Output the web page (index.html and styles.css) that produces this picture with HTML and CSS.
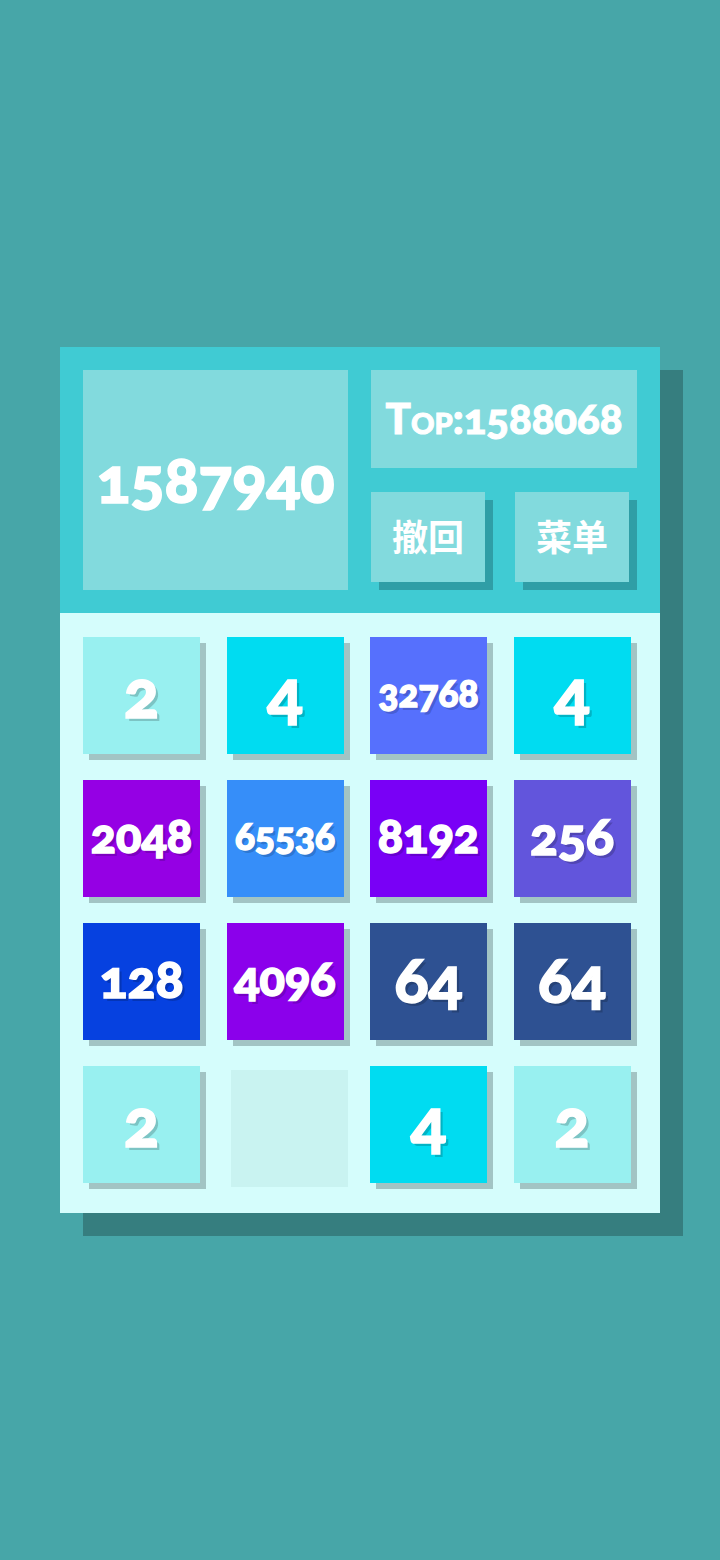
FILE: index.html
```html
<!DOCTYPE html>
<html lang="zh">
<head>
<meta charset="utf-8">
<link rel="stylesheet" href="styles.css">
</head>
<body>
<div class="page">
  <div class="game">
    <div class="header">
      <div class="score">1587940</div>
      <div class="side">
        <div class="top">Top:1588068</div>
        <div class="buttons">
          <div class="btn">撤回</div>
          <div class="btn">菜单</div>
        </div>
      </div>
    </div>
    <div class="board">
      <div class="tile t2 d1">2</div>
      <div class="tile t4 d1">4</div>
      <div class="tile t32768 d5">32768</div>
      <div class="tile t4 d1">4</div>
      <div class="tile t2048 d4">2048</div>
      <div class="tile t65536 d5">65536</div>
      <div class="tile t8192 d4">8192</div>
      <div class="tile t256 d3">256</div>
      <div class="tile t128 d3">128</div>
      <div class="tile t4096 d4">4096</div>
      <div class="tile t64 d2">64</div>
      <div class="tile t64 d2">64</div>
      <div class="tile t2 d1">2</div>
      <div class="tile empty"></div>
      <div class="tile t4 d1">4</div>
      <div class="tile t2 d1">2</div>
    </div>
  </div>
</div>
</body>
</html>
```

FILE: styles.css
```css
html, body {
  margin: 0;
  padding: 0;
  background: #47a6a8;
}
.page {
  width: 720px;
  height: 1560px;
  box-sizing: border-box;
  padding: 347px 60px 0 60px;
}
.game {
  width: 600px;
  box-shadow: 23px 23px 0 #367e7f;
  font-family: "Lato", "Noto Sans CJK SC", sans-serif;
  font-weight: 900;
  color: #fff;
}
.header {
  background: #40cbd3;
  padding: 23px;
  display: grid;
  grid-template-columns: 265px 266px;
  gap: 23px;
  height: 266px;
  box-sizing: border-box;
}
.score {
  background: #82dadd;
  display: flex;
  align-items: center;
  justify-content: center;
  font-size: 63px;
  font-variant-numeric: oldstyle-nums;
  padding-bottom: 4px;
  box-sizing: border-box;
  white-space: nowrap;
  -webkit-text-stroke: 1.5px #fff;
}
.side {
  display: flex;
  flex-direction: column;
  gap: 24px;
}
.top {
  background: #82dadd;
  height: 98px;
  display: flex;
  align-items: center;
  justify-content: center;
  font-size: 42px;
  font-variant: small-caps;
  font-variant-numeric: oldstyle-nums;
  white-space: nowrap;
  padding-bottom: 2px;
  box-sizing: border-box;
  -webkit-text-stroke: 1px #fff;
}
.buttons {
  display: flex;
  justify-content: space-between;
  padding-right: 8px;
}
.btn {
  width: 114px;
  height: 90px;
  background: #82dadd;
  box-shadow: 8px 8px 0 #2f9ea6;
  display: flex;
  align-items: center;
  justify-content: center;
  font-family: "Noto Sans CJK SC", sans-serif;
  font-weight: 700;
  font-size: 36px;
  padding-bottom: 4px;
  box-sizing: border-box;
}
.board {
  background: #d5fdfc;
  padding: 24px 29px 30px 23px;
  display: grid;
  grid-template-columns: repeat(4, 117px);
  grid-auto-rows: 116.5px;
  gap: 26.5px;
}
.tile {
  display: flex;
  align-items: center;
  justify-content: center;
  box-shadow: 6px 6px 0 #a2c4c4;
  text-shadow: 3px 3px 0 rgba(0, 0, 0, 0.18);
  font-variant-numeric: oldstyle-nums;
  white-space: nowrap;
  padding-bottom: 6px;
  box-sizing: border-box;
  -webkit-text-stroke: 1.5px #fff;
}
.d1 { font-size: 66px; }
.d2 { font-size: 63px; }
.d3 { font-size: 52px; }
.d4 { font-size: 47px; }
.d5 { font-size: 37px; }
.empty {
  background: #c9f3f1;
  box-shadow: none;
  transform: translate(4px, 4px);
}
.t2 { background: #98f0f0; }
.t4 { background: #00dcf1; }
.t32768 { background: #5670fd; }
.t2048 { background: #9500e4; }
.t65536 { background: #368ef9; }
.t8192 { background: #7900f6; }
.t256 { background: #6255dc; }
.t128 { background: #0641e0; }
.t4096 { background: #8b00eb; }
.t64 { background: #2e5192; }
```
